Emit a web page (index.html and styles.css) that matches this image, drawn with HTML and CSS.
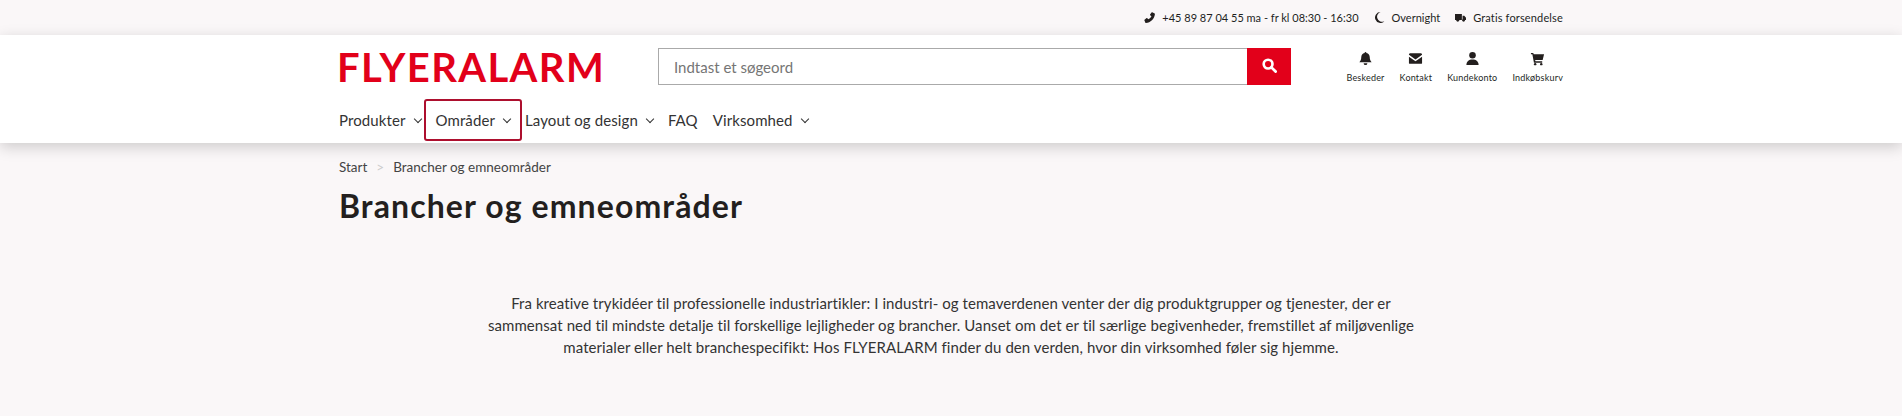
FILE: index.html
```html
<!DOCTYPE html>
<html lang="da">
<head>
    <meta charset="UTF-8">
    <title>Brancher og emneområder</title>
    <link rel="stylesheet" href="styles.css">
</head>
<body>
    <div class="topbar">
        <div class="wrap topbar-inner">
            <span class="top-item">
                <svg class="top-icon" viewBox="0 0 16 16"><path d="M12 0.500l3.500 1.500c.3.100.5.500.4.800C15.200 10 9.500 15.500 2.800 16c-.3 0-.7-.2-.8-.5L.500 12c-.1-.3 0-.7.300-.9l3-2.200c.3-.2.700-.2 1 .1l1.400 1.700c2-1 3.700-2.700 4.600-4.600L8.900 4.700c-.3-.2-.3-.7-.1-1l2.200-3c.2-.2.600-.3 1-.2z"/></svg>
                +45 89 87 04 55 ma - fr kl 08:30 - 16:30
            </span>
            <span class="top-item">
                <svg class="top-icon" viewBox="0 0 16 16"><path d="M9.500 0a8 8 0 1 0 5.500 13.800c-.2-.1-.5 0-1 0A6 6 0 0 1 9.500 0z"/></svg>
                Overnight
            </span>
            <span class="top-item">
                <svg class="top-icon" viewBox="0 0 16 16"><path d="M0 3h10v8.500H0zM11 5.500h2.500L16 8.500v3h-5z"/><circle cx="4" cy="12" r="2"/><circle cx="12.500" cy="12" r="2"/></svg>
                Gratis forsendelse
            </span>
        </div>
    </div>

    <header class="header">
        <div class="wrap">
            <div class="header-main">
                <a class="logo">FLYERALARM</a>
                <form class="search">
                    <input class="search-input" type="text" placeholder="Indtast et søgeord">
                    <button class="search-btn" type="button">
                        <svg viewBox="0 0 16 16" width="15" height="15"><circle cx="6.500" cy="6.500" r="4.700" fill="none" stroke="#fff" stroke-width="2.800"/><path d="M10 10l4.500 4.500" stroke="#fff" stroke-width="3" stroke-linecap="round"/></svg>
                    </button>
                </form>
                <div class="tools">
                    <a class="tool">
                        <svg class="tool-icon" viewBox="0 0 16 16"><path d="M8 1c.6 0 1 .4 1 1 2.300.5 3.500 2.200 3.500 4.500 0 3 1 4.200 2 5.500H1.500c1-1.300 2-2.500 2-5.500C3.500 4.200 4.700 2.500 7 2c0-.6.400-1 1-1zM6 13h4a2 2 0 0 1-4 0z"/></svg>
                        Beskeder
                    </a>
                    <a class="tool">
                        <svg class="tool-icon" viewBox="0 0 16 16"><path d="M1 4C1 3.200 1.700 2.500 2.500 2.500h11c.8 0 1.500.7 1.500 1.500L8 9zM1 6v7c0 .3.200.5.500.5h13c.3 0 .5-.2.500-.5V6l-7 4.800z"/></svg>
                        Kontakt
                    </a>
                    <a class="tool">
                        <svg class="tool-icon" viewBox="0 0 16 16"><circle cx="8" cy="4.500" r="3.500"/><path d="M1.500 15c0-4 2.500-6 6.500-6s6.500 2 6.500 6z"/></svg>
                        Kundekonto
                    </a>
                    <a class="tool">
                        <svg class="tool-icon" viewBox="0 0 16 16"><path d="M1 2h2.500l.4 1.500H15l-1.500 6H5.500L5.800 11H13v1.500H4.200L2.500 3.500H1z"/><circle cx="5.500" cy="14" r="1.300"/><circle cx="12" cy="14" r="1.300"/></svg>
                        Indkøbskurv
                    </a>
                </div>
            </div>
            <nav class="nav">
                <a class="nav-item">Produkter <span class="chev"></span></a>
                <a class="nav-item nav-item-active">Områder <span class="chev"></span></a>
                <a class="nav-item">Layout og design <span class="chev"></span></a>
                <a class="nav-item">FAQ</a>
                <a class="nav-item">Virksomhed <span class="chev"></span></a>
            </nav>
        </div>
    </header>

    <main class="wrap">
        <div class="crumbs"><span>Start</span><span class="crumb-sep">&gt;</span><span>Brancher og emneområder</span></div>
        <h1 class="title">Brancher og emneområder</h1>
        <p class="intro">Fra kreative trykidéer til professionelle industriartikler: I industri- og temaverdenen venter der dig produktgrupper og tjenester, der er sammensat ned til mindste detalje til forskellige lejligheder og brancher. Uanset om det er til særlige begivenheder, fremstillet af miljøvenlige materialer eller helt branchespecifikt: Hos FLYERALARM finder du den verden, hvor din virksomhed føler sig hjemme.</p>
    </main>
</body>
</html>
```
FILE: styles.css
```css
body {
    margin: 0;
    background-color: #faf7f8;
    color: #231f1e;
    font-family: Lato, "Noto Sans", sans-serif;
}

.wrap {
    width: 1224px;
    margin: 0 auto;
}

.topbar {
    height: 35px;
    font-size: 11px;
}

.topbar-inner {
    height: 35px;
    display: flex;
    justify-content: flex-end;
    align-items: center;
    gap: 15px;
}

.top-item {
    display: flex;
    align-items: center;
    gap: 7px;
}

.top-item:last-child {
    letter-spacing: 0.15px;
}

.top-icon {
    width: 11px;
    height: 11px;
    fill: #231f1e;
}

.header {
    background-color: #fff;
    height: 108px;
    box-shadow: 0 4px 14px rgba(0, 0, 0, 0.18);
}

.header-main {
    display: flex;
    align-items: center;
    height: 63px;
}

.logo {
    width: 321px;
    margin-left: -2px;
    color: #e2001a;
    font-size: 40px;
    font-weight: 700;
    letter-spacing: 1.4px;
}

.search {
    display: flex;
    width: 633px;
    height: 37px;
}

.search-input {
    flex: 1;
    padding: 0 15px;
    border: 1px solid #aaa;
    border-right: none;
    font-family: inherit;
    font-size: 15px;
}

.search-btn {
    width: 44px;
    border: none;
    background-color: #e2001a;
}

.tools {
    display: flex;
    justify-content: flex-end;
    gap: 15px;
    flex: 1;
}

.tool {
    display: flex;
    flex-direction: column;
    align-items: center;
    gap: 6px;
    font-size: 9px;
    letter-spacing: 0.2px;
}

.tool-icon {
    width: 15px;
    height: 15px;
    fill: #231f1e;
}

.nav {
    display: flex;
    align-items: center;
    gap: 15px;
    padding-top: 1px;
}

.nav-item {
    display: flex;
    align-items: center;
    gap: 9px;
    height: 42px;
    font-size: 15px;
    letter-spacing: 0.1px;
    color: #333;
    box-sizing: border-box;
}

.nav-item-active {
    margin: 0 -12px;
    padding: 0 10px;
    border: 2px solid #ad0f2e;
    border-radius: 3px;
}

.chev {
    width: 5px;
    height: 5px;
    margin-top: -3px;
    border-right: 1px solid #333;
    border-bottom: 1px solid #333;
    transform: rotate(45deg);
}

.crumbs {
    display: flex;
    gap: 9px;
    margin-top: 16px;
    font-size: 13.500px;
    color: #444;
}

.crumb-sep {
    color: #ccc;
}

.title {
    margin: 11px 0 0;
    font-size: 32px;
    font-weight: 700;
    letter-spacing: 1.1px;
}

.intro {
    width: 945px;
    margin: 67px auto 0;
    text-align: center;
    font-size: 15px;
    letter-spacing: 0.07px;
    line-height: 22px;
    color: #333;
}
```
